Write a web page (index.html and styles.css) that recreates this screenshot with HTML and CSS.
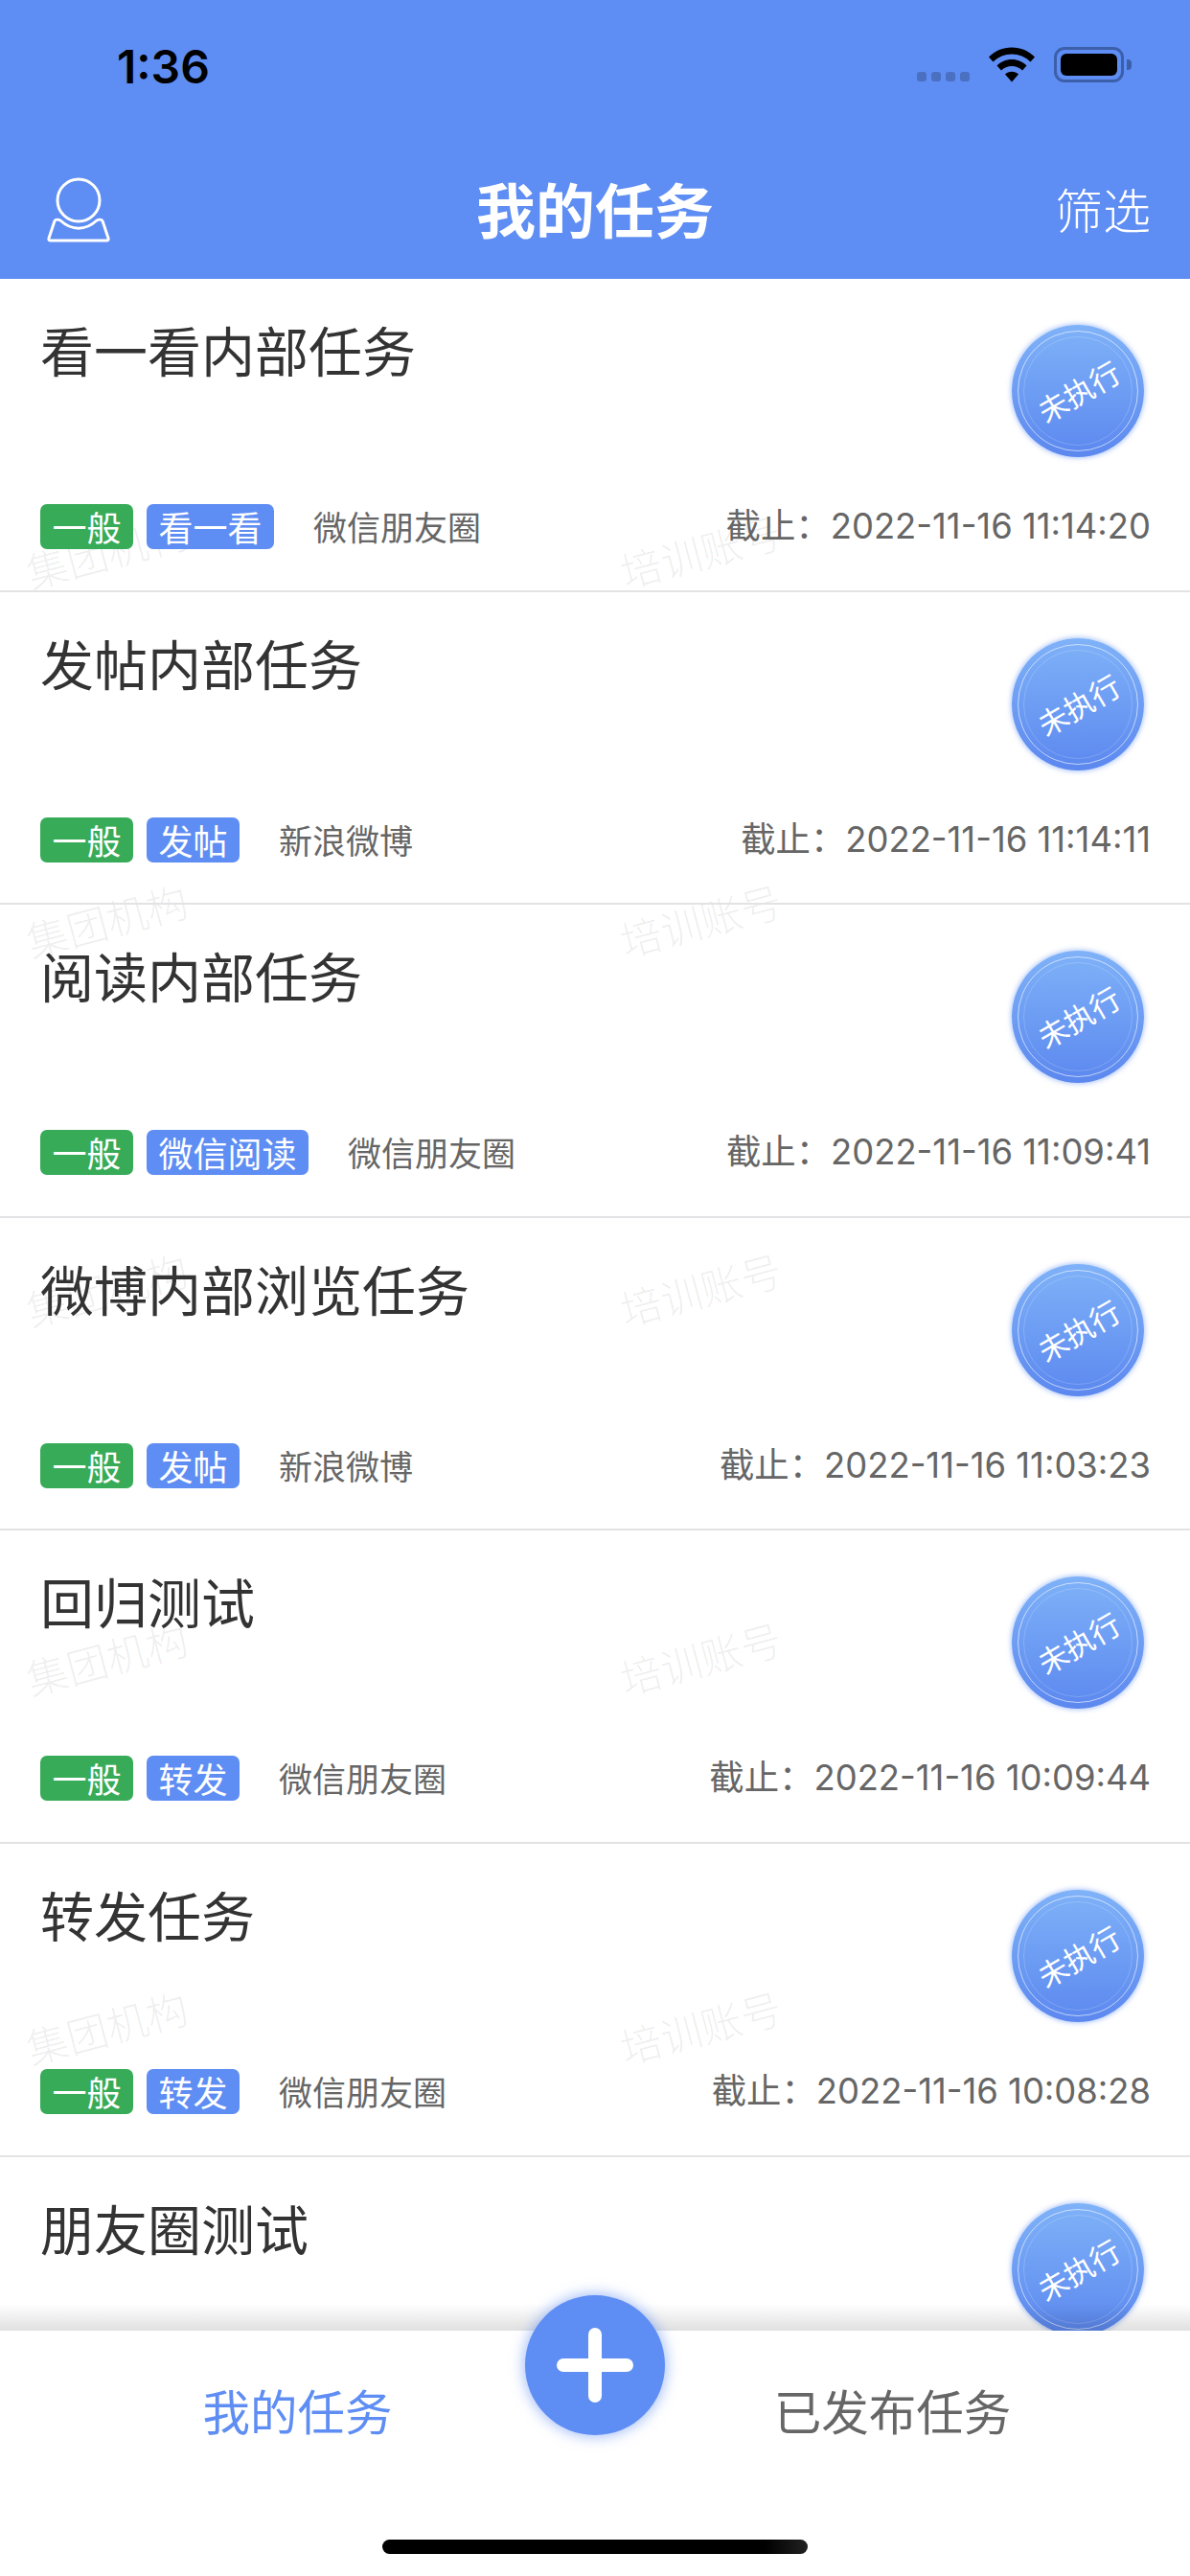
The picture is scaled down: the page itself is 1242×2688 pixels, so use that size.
FILE: index.html
```html
<!DOCTYPE html>
<html lang="zh-CN">
<head>
    <meta charset="UTF-8">
    <meta name="viewport" content="width=device-width, initial-scale=1.0">
    <title>我的任务</title>
    <link rel="stylesheet" href="styles.css">
</head>
<body>
    <div class="screen">
        <header class="header">
            <div class="status-bar">
                <span class="clock">1:36</span>
                <div class="status-icons">
                    <div class="signal"><i></i><i></i><i></i><i></i></div>
                    <svg class="wifi" width="48" height="37" viewBox="0 0 48 37">
                        <path d="M0 10.500C6.500 4 14.500 0.500 24 0.500S41.500 4 48 10.500L43.500 15.500C38 10.200 31.500 7.500 24 7.500S10 10.200 4.500 15.500Z"/>
                        <path d="M8.500 19.500C12.500 15.500 18 13 24 13S35.500 15.500 39.500 19.500L35 24.500C32 21.700 28.300 20 24 20S16 21.700 13 24.500Z"/>
                        <path d="M17 28.500C19 26.700 21.300 25.700 24 25.700S29 26.700 31 28.500L24 36.500Z"/>
                    </svg>
                    <div class="battery"><div class="battery-level"></div></div>
                </div>
            </div>
            <div class="nav-bar">
                <svg class="user-icon" width="68" height="68" viewBox="0 0 68 68" fill="none" stroke="#fff" stroke-width="3">
                    <circle cx="34" cy="24" r="22"/>
                    <path d="M9 45.500C10 44 13 44 15 45C27 56 41 56 53 45C55 44 58 44 59 45.500L65 63.500C65.500 65 65 66 63 66H5C3 66 2.500 65 3 63.500Z" stroke-linejoin="round"/>
                </svg>
                <h1 class="nav-title">我的任务</h1>
                <span class="nav-action">筛选</span>
            </div>
        </header>

        <main class="task-list">
            <div class="task">
                <div class="task-head">
                    <h2 class="task-title">看一看内部任务</h2>
                    <div class="stamp"><span>未执行</span></div>
                </div>
                <div class="task-meta">
                    <span class="tag tag-green">一般</span>
                    <span class="tag tag-blue">看一看</span>
                    <span class="source">微信朋友圈</span>
                    <span class="deadline">截止：2022-11-16 11:14:20</span>
                </div>
            </div>
            <div class="task">
                <div class="task-head">
                    <h2 class="task-title">发帖内部任务</h2>
                    <div class="stamp"><span>未执行</span></div>
                </div>
                <div class="task-meta">
                    <span class="tag tag-green">一般</span>
                    <span class="tag tag-blue">发帖</span>
                    <span class="source">新浪微博</span>
                    <span class="deadline">截止：2022-11-16 11:14:11</span>
                </div>
            </div>
            <div class="task">
                <div class="task-head">
                    <h2 class="task-title">阅读内部任务</h2>
                    <div class="stamp"><span>未执行</span></div>
                </div>
                <div class="task-meta">
                    <span class="tag tag-green">一般</span>
                    <span class="tag tag-blue">微信阅读</span>
                    <span class="source">微信朋友圈</span>
                    <span class="deadline">截止：2022-11-16 11:09:41</span>
                </div>
            </div>
            <div class="task">
                <div class="task-head">
                    <h2 class="task-title">微博内部浏览任务</h2>
                    <div class="stamp"><span>未执行</span></div>
                </div>
                <div class="task-meta">
                    <span class="tag tag-green">一般</span>
                    <span class="tag tag-blue">发帖</span>
                    <span class="source">新浪微博</span>
                    <span class="deadline">截止：2022-11-16 11:03:23</span>
                </div>
            </div>
            <div class="task">
                <div class="task-head">
                    <h2 class="task-title">回归测试</h2>
                    <div class="stamp"><span>未执行</span></div>
                </div>
                <div class="task-meta">
                    <span class="tag tag-green">一般</span>
                    <span class="tag tag-blue">转发</span>
                    <span class="source">微信朋友圈</span>
                    <span class="deadline">截止：2022-11-16 10:09:44</span>
                </div>
            </div>
            <div class="task">
                <div class="task-head">
                    <h2 class="task-title">转发任务</h2>
                    <div class="stamp"><span>未执行</span></div>
                </div>
                <div class="task-meta">
                    <span class="tag tag-green">一般</span>
                    <span class="tag tag-blue">转发</span>
                    <span class="source">微信朋友圈</span>
                    <span class="deadline">截止：2022-11-16 10:08:28</span>
                </div>
            </div>
            <div class="task">
                <div class="task-head">
                    <h2 class="task-title">朋友圈测试</h2>
                    <div class="stamp"><span>未执行</span></div>
                </div>
            </div>

            <div class="watermark">
                <span>集团机构</span><span>培训账号</span>
                <span>集团机构</span><span>培训账号</span>
                <span>集团机构</span><span>培训账号</span>
                <span>集团机构</span><span>培训账号</span>
                <span>集团机构</span><span>培训账号</span>
            </div>
        </main>

        <footer class="tab-bar">
            <div class="tabs">
                <span class="tab tab-active">我的任务</span>
                <span class="tab">已发布任务</span>
            </div>
            <div class="fab"><i class="fab-h"></i><i class="fab-v"></i></div>
            <div class="home-indicator"></div>
        </footer>
    </div>
</body>
</html>
```

FILE: styles.css
```css
* {
    box-sizing: border-box;
}

body {
    margin: 0;
    background-color: #fff;
    font-family: "Noto Sans CJK SC", "Noto Sans", sans-serif;
}

.screen {
    display: flex;
    flex-direction: column;
    width: 1242px;
    height: 2688px;
    overflow: hidden;
}

/* header */
.header {
    flex: none;
    height: 291px;
    background-color: #5e8df3;
}

.status-bar {
    display: flex;
    justify-content: space-between;
    height: 132px;
    padding: 44px 69px 0 122px;
}

.clock {
    font-family: Inter, "Liberation Sans", sans-serif;
    font-size: 48px;
    font-weight: 600;
    line-height: 52px;
    color: #000;
}

.status-icons {
    display: flex;
    align-items: flex-start;
    padding-top: 5px;
}

.signal {
    display: flex;
    gap: 5px;
    margin-top: 26px;
    margin-right: 20px;
}

.signal i {
    width: 10px;
    height: 10px;
    border-radius: 3px;
    background-color: rgba(0, 0, 0, 0.2);
}

.wifi {
    margin-right: 20px;
}

.battery {
    position: relative;
    width: 73px;
    height: 37px;
    padding: 4px;
    border: 3px solid #3c5fa9;
    border-radius: 11px;
}

.battery::after {
    content: "";
    position: absolute;
    top: 10px;
    right: -11px;
    width: 5px;
    height: 11px;
    border-radius: 0 4px 4px 0;
    background-color: #3c5fa9;
}

.battery-level {
    height: 100%;
    border-radius: 6px;
    background-color: #000;
}

.nav-bar {
    display: flex;
    align-items: center;
    justify-content: space-between;
    position: relative;
    height: 159px;
    padding: 0 41px 0 48px;
    color: #fff;
}

.user-icon {
    margin-top: 14px;
}

.nav-title {
    position: absolute;
    left: 0;
    right: 0;
    top: 43px;
    margin: 0;
    font-size: 62px;
    font-weight: 700;
    line-height: 84px;
    text-align: center;
}

.nav-action {
    margin-top: 10px;
    font-size: 50px;
    font-weight: 300;
}

/* task list */
.task-list {
    position: relative;
    flex: 1;
    overflow: hidden;
}

.task {
    position: relative;
    z-index: 1;
    height: 326.6px;
    padding: 0 41px 0 42px;
    border-bottom: 2px solid #e3e3e5;
}

.task-head {
    display: flex;
    align-items: flex-start;
    justify-content: space-between;
    height: 235px;
}

.task-title {
    margin: 36px 0 0;
    font-size: 56px;
    font-weight: 400;
    line-height: 74px;
    color: #333;
}

.stamp {
    display: flex;
    flex: none;
    align-items: center;
    justify-content: center;
    position: relative;
    width: 138px;
    height: 138px;
    margin-top: 48px;
    margin-right: 7px;
    border-radius: 50%;
    background: linear-gradient(#7fb2f8, #5c88ef);
    box-shadow: 0 0 5px 1px rgba(94, 141, 243, 0.5);
}

.stamp::before {
    content: "";
    position: absolute;
    top: 6px;
    right: 6px;
    bottom: 6px;
    left: 6px;
    border: 1.5px solid rgba(255, 255, 255, 0.6);
    border-radius: 50%;
}

.stamp::after {
    content: "";
    position: absolute;
    top: 12px;
    right: 12px;
    bottom: 12px;
    left: 12px;
    border: 1px solid rgba(255, 255, 255, 0.18);
    border-radius: 50%;
}

.stamp span {
    transform: rotate(-30deg);
    font-size: 31px;
    line-height: 40px;
    color: #fff;
}

.task-meta {
    display: flex;
    align-items: center;
    height: 47px;
    font-size: 36px;
    line-height: 47px;
}

.tag {
    height: 47px;
    margin-right: 14px;
    padding: 0 12.5px;
    border-radius: 7px;
    color: #fff;
}

.tag-green {
    background-color: #37ab58;
}

.tag-blue {
    background-color: #5e8df3;
}

.source {
    margin-bottom: 2px;
    margin-left: 27px;
    font-size: 35px;
    color: #666;
}

.deadline {
    margin-left: auto;
    font-family: Inter, "Noto Sans CJK SC", sans-serif;
    font-size: 36.4px;
    color: #666;
}

.watermark {
    display: grid;
    position: absolute;
    top: 90px;
    left: 11px;
    grid-template-columns: 620px 620px;
    grid-auto-rows: 385px;
    align-items: center;
    pointer-events: none;
}

.watermark span {
    width: 200px;
    transform: rotate(-15deg);
    font-size: 43px;
    font-weight: 300;
    color: rgba(0, 0, 0, 0.07);
    text-align: center;
}

/* bottom tabs */
.tab-bar {
    position: relative;
    z-index: 2;
    flex: none;
    height: 256px;
    background-color: #fff;
}

.tab-bar::before {
    content: "";
    position: absolute;
    top: -28px;
    left: 0;
    right: 0;
    height: 28px;
    background: linear-gradient(rgba(0, 0, 0, 0), rgba(0, 0, 0, 0.12));
}

.tabs {
    display: grid;
    grid-template-columns: 1fr 1fr;
    padding-top: 50px;
    font-size: 49.5px;
    line-height: 66px;
    text-align: center;
    color: #666;
}

.tab-active {
    color: #5e8df3;
}

.fab {
    position: absolute;
    top: -37px;
    left: 548px;
    width: 146px;
    height: 146px;
    border-radius: 50%;
    background-color: #5e8df3;
    box-shadow: 0 0 14px 2px rgba(94, 141, 243, 0.55);
}

.fab-h {
    position: absolute;
    top: 66px;
    left: 33px;
    width: 80px;
    height: 14px;
    border-radius: 7px;
    background-color: #fff;
}

.fab-v {
    position: absolute;
    top: 34px;
    left: 66px;
    width: 14px;
    height: 78px;
    border-radius: 7px;
    background-color: #fff;
}

.home-indicator {
    position: absolute;
    left: 399px;
    bottom: 23px;
    width: 444px;
    height: 15px;
    border-radius: 8px;
    background: linear-gradient(90deg, #000 90%, #222);
}
```
